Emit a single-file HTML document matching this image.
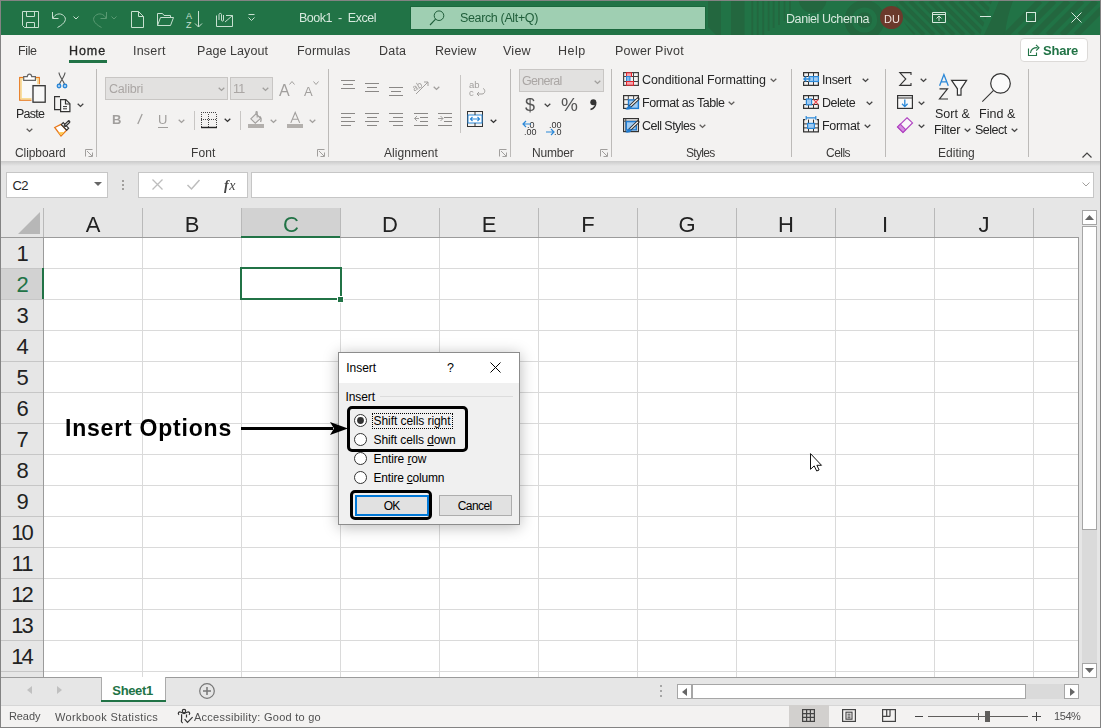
<!DOCTYPE html><html><head><meta charset="utf-8"><style>
html,body{margin:0;padding:0;}
body{width:1101px;height:728px;position:relative;overflow:hidden;background:#f3f2f1;font-family:"Liberation Sans",sans-serif;-webkit-font-smoothing:antialiased;}
.a{position:absolute;}
.t{position:absolute;line-height:1;white-space:nowrap;}
.g{will-change:transform;}
svg{overflow:visible;}
</style></head><body>

<div class="a" style="left:0px;top:0px;width:1101px;height:35px;background:#217346;"></div>
<svg class="a" style="left:700px;top:1px;overflow:hidden" width="400" height="34" viewBox="0 0 400 34"><path d="M8 0H21V34H16L8 26Z" fill="#23673f"/><rect x="31" y="0" width="13.5" height="34" fill="#23673f"/><rect x="51.4" y="0" width="1.8" height="34" fill="#23673f"/><rect x="56.8" y="0" width="1.8" height="34" fill="#23673f"/><rect x="62.3" y="0" width="1.8" height="34" fill="#23673f"/><rect x="67.7" y="0" width="1.8" height="30" fill="#23673f"/><rect x="72.7" y="0" width="1.8" height="27" fill="#23673f"/><rect x="78" y="0" width="1.8" height="24" fill="#23673f"/><rect x="83.6" y="0" width="1.8" height="20" fill="#23673f"/><rect x="89" y="0" width="1.8" height="12" fill="#23673f"/><circle cx="112.7" cy="-2" r="14" fill="#23673f"/><circle cx="164.5" cy="19" r="16.3" stroke="#23673f" stroke-width="7.4" fill="none"/><circle cx="164.5" cy="19" r="7.7" fill="#23673f"/><clipPath id="cpd"><path d="M195 0H292L280 34H214C205 25 198 12 195 0Z"/></clipPath><g clip-path="url(#cpd)"><line x1="180" y1="0" x2="214" y2="34" stroke="#23673f" stroke-width="4"/><line x1="190" y1="0" x2="224" y2="34" stroke="#23673f" stroke-width="4"/><line x1="200" y1="0" x2="234" y2="34" stroke="#23673f" stroke-width="4"/><line x1="210" y1="0" x2="244" y2="34" stroke="#23673f" stroke-width="4"/><line x1="220" y1="0" x2="254" y2="34" stroke="#23673f" stroke-width="4"/><line x1="230" y1="0" x2="264" y2="34" stroke="#23673f" stroke-width="4"/><line x1="240" y1="0" x2="274" y2="34" stroke="#23673f" stroke-width="4"/><line x1="250" y1="0" x2="284" y2="34" stroke="#23673f" stroke-width="4"/><line x1="260" y1="0" x2="294" y2="34" stroke="#23673f" stroke-width="4"/><line x1="270" y1="0" x2="304" y2="34" stroke="#23673f" stroke-width="4"/><line x1="280" y1="0" x2="314" y2="34" stroke="#23673f" stroke-width="4"/><line x1="290" y1="0" x2="324" y2="34" stroke="#23673f" stroke-width="4"/></g><path d="M299 0H313C309 10 306 22 305 34H284C290 22 295 10 299 0Z" fill="#23673f"/><clipPath id="cpe"><path d="M322 0H400V34H300Z"/></clipPath><g clip-path="url(#cpe)"><line x1="340" y1="0" x2="306" y2="34" stroke="#23673f" stroke-width="6"/><line x1="354" y1="0" x2="320" y2="34" stroke="#23673f" stroke-width="6"/><line x1="368" y1="0" x2="334" y2="34" stroke="#23673f" stroke-width="6"/><line x1="382" y1="0" x2="348" y2="34" stroke="#23673f" stroke-width="6"/><line x1="396" y1="0" x2="362" y2="34" stroke="#23673f" stroke-width="6"/><line x1="410" y1="0" x2="376" y2="34" stroke="#23673f" stroke-width="6"/></g></svg>
<svg class="a" style="left:22px;top:11px;" width="17" height="17" viewBox="0 0 17 17" fill="none"><path d="M0.5 0.5H16.5V16.5H2.5L0.5 14.5Z M4.5 0.5V5.5H12.5V0.5 M4.5 16.5V11.5H12.5V16.5" stroke="#c7e0d0" stroke-width="1"/></svg>
<svg class="a" style="left:52px;top:11px;" width="16" height="17" viewBox="0 0 16 17" fill="none"><path d="M0.5 1V7.5H6.5 M1 7 C3 3, 8 1.5, 11.5 4.5 C15 7.5, 14 12, 5.5 16.5" stroke="#c7e0d0" stroke-width="1"/></svg>
<svg class="a" style="left:73px;top:16px;" width="6" height="4" viewBox="0 0 6 4" fill="none"><path d="M0.5 0.5L3 3L5.5 0.5" stroke="#c7e0d0" stroke-width="1"/></svg>
<svg class="a" style="left:91px;top:11px;" width="16" height="17" viewBox="0 0 16 17" fill="none"><path d="M15.5 1V7.5H9.5 M15 7 C13 3, 8 1.5, 4.5 4.5 C1 7.5, 2 12, 10.5 16.5" stroke="#5a9a73" stroke-width="1"/></svg>
<svg class="a" style="left:111px;top:16px;" width="6" height="4" viewBox="0 0 6 4" fill="none"><path d="M0.5 0.5L3 3L5.5 0.5" stroke="#5a9a73" stroke-width="1"/></svg>
<svg class="a" style="left:131px;top:11px;" width="13" height="17" viewBox="0 0 13 17" fill="none"><path d="M0.5 0.5H7.5L12.5 5.5V16.5H0.5Z M7.5 0.5V5.5H12.5" stroke="#c7e0d0" stroke-width="1"/></svg>
<svg class="a" style="left:157px;top:13px;" width="17" height="13" viewBox="0 0 17 13" fill="none"><path d="M0.5 12.5V0.5H5.5L7 2.5H13.5V4.5 M0.5 12.5H13.5L16.5 4.5H3.5L0.5 12.5" stroke="#c7e0d0" stroke-width="1"/></svg>
<svg class="a" style="left:186px;top:11px;" width="18" height="17" viewBox="0 0 18 17" fill="none"><text x="0" y="8" font-family="Liberation Sans" font-size="9" fill="#c7e0d0">A</text><text x="0" y="16.5" font-family="Liberation Sans" font-size="9" fill="#c7e0d0">Z</text><path d="M12.5 0V16 M9 12.5L12.5 16L16 12.5" stroke="#c7e0d0" stroke-width="1"/></svg>
<svg class="a" style="left:216px;top:12px;" width="18" height="15" viewBox="0 0 18 15" fill="none"><path d="M0.5 3.5V14.5H16.5V3.5H10 M16.5 3.5L9 10" stroke="#c7e0d0" stroke-width="1"/><path d="M3 8V2.5C3 1 5.5 1 5.5 2.5V8 C5.5 9.5 7.5 9.5 7.5 8V3" stroke="#c7e0d0" stroke-width="1"/></svg>
<svg class="a" style="left:248px;top:14px;" width="7" height="8" viewBox="0 0 7 8" fill="none"><path d="M0.5 0.5H6.5 M0.5 3.5L3.5 6.5L6.5 3.5" stroke="#c7e0d0" stroke-width="1"/></svg>
<div class="t g" style="left:298.50px;top:12px;font-size:12.5px;color:#d7e9de;font-weight:normal;letter-spacing:-0.472px;">Book1&nbsp; -&nbsp; Excel</div>
<div class="a" style="left:410px;top:6px;width:296px;height:24px;background:#9fcfb2;border:1px solid #1b683d;box-sizing:border-box;"></div>
<svg class="a" style="left:429px;top:10px;" width="16" height="16" viewBox="0 0 16 16" fill="none"><circle cx="10" cy="5.7" r="4.8" stroke="#1f5e3a" stroke-width="1"/><path d="M6.6 9.2L1 15" stroke="#1f5e3a" stroke-width="1.1"/></svg>
<div class="t g" style="left:459.50px;top:12px;font-size:12.5px;color:#1f5e3a;font-weight:normal;letter-spacing:-0.358px;">Search (Alt+Q)</div>
<div class="t g" style="left:785.50px;top:13px;font-size:12.5px;color:#d7e9de;font-weight:normal;letter-spacing:-0.425px;">Daniel Uchenna</div>
<div class="a" style="left:880px;top:6px;width:23px;height:23px;border-radius:50%;background:#6b3a2c;"></div>
<div class="t g" style="left:591.5px;width:600px;text-align:center;top:14px;font-size:11px;color:#f2e6e2;font-weight:normal;">DU</div>
<svg class="a" style="left:932px;top:12px;" width="14" height="11" viewBox="0 0 14 11" fill="none"><path d="M0.5 0.5H13.5V10.5H0.5Z M0.5 2.5H13.5 M7 9V4 M4.5 6.5L7 4L9.5 6.5" stroke="#d7e9de" stroke-width="1"/></svg>
<div class="a" style="left:980px;top:16px;width:11px;height:1px;background:#d7e9de;"></div>
<div class="a" style="left:1026px;top:12px;width:10px;height:10px;border:1px solid #d7e9de;box-sizing:border-box;"></div>
<svg class="a" style="left:1071px;top:12px;" width="11" height="11" viewBox="0 0 11 11" fill="none"><path d="M0.5 0.5L10.5 10.5M10.5 0.5L0.5 10.5" stroke="#d7e9de" stroke-width="1"/></svg>
<div class="t g" style="left:17.50px;top:45px;font-size:12.5px;color:#3b3a39;font-weight:normal;letter-spacing:-0.389px;">File</div>
<div class="t g" style="left:68.50px;top:45px;font-size:12.5px;color:#262626;font-weight:normal;letter-spacing:0.914px;-webkit-text-stroke:0.3px #262626;">Home</div>
<div class="t g" style="left:133.00px;top:45px;font-size:12.5px;color:#3b3a39;font-weight:normal;letter-spacing:0.222px;">Insert</div>
<div class="t g" style="left:196.50px;top:45px;font-size:12.5px;color:#3b3a39;font-weight:normal;letter-spacing:0.072px;">Page Layout</div>
<div class="t g" style="left:297.20px;top:45px;font-size:12.5px;color:#3b3a39;font-weight:normal;letter-spacing:0.163px;">Formulas</div>
<div class="t g" style="left:379.40px;top:45px;font-size:12.5px;color:#3b3a39;font-weight:normal;letter-spacing:0.198px;">Data</div>
<div class="t g" style="left:435.00px;top:45px;font-size:12.5px;color:#3b3a39;font-weight:normal;letter-spacing:0.050px;">Review</div>
<div class="t g" style="left:503.00px;top:45px;font-size:12.5px;color:#3b3a39;font-weight:normal;letter-spacing:0.256px;">View</div>
<div class="t g" style="left:558.20px;top:45px;font-size:12.5px;color:#3b3a39;font-weight:normal;letter-spacing:0.470px;">Help</div>
<div class="t g" style="left:615.20px;top:45px;font-size:12.5px;color:#3b3a39;font-weight:normal;letter-spacing:0.200px;">Power Pivot</div>
<div class="a" style="left:69px;top:60px;width:38px;height:3px;background:#217346;"></div>
<div class="a" style="left:1020px;top:38px;width:66px;height:22px;background:#fff;border:1px solid #dcdad8;border-radius:4px;"></div>
<svg class="a" style="left:1027px;top:43px;" width="14" height="14" viewBox="0 0 14 14" fill="none"><path d="M1.5 5.5V12.5H9.5V9.5" stroke="#217346" stroke-width="1.1"/><path d="M3.5 10C3.8 6.5 6.5 4.6 10.5 4.6" stroke="#217346" stroke-width="1.1"/><path d="M9 1.8L12 4.7L9.2 7.6" stroke="#217346" stroke-width="1.1"/></svg>
<div class="t g" style="left:1043.20px;top:44px;font-size:13px;color:#217346;font-weight:bold;letter-spacing:-0.228px;">Share</div>
<div class="a" style="left:96px;top:69px;width:1px;height:88px;background:#bcbab8;"></div>
<div class="a" style="left:328px;top:69px;width:1px;height:88px;background:#bcbab8;"></div>
<div class="a" style="left:510px;top:69px;width:1px;height:88px;background:#bcbab8;"></div>
<div class="a" style="left:611px;top:69px;width:1px;height:88px;background:#bcbab8;"></div>
<div class="a" style="left:791px;top:69px;width:1px;height:88px;background:#bcbab8;"></div>
<div class="a" style="left:885px;top:69px;width:1px;height:88px;background:#bcbab8;"></div>
<div class="a" style="left:1028px;top:69px;width:1px;height:88px;background:#bcbab8;"></div>
<div class="a" style="left:0;top:161px;width:1101px;height:5px;background:linear-gradient(#cacaca,#e6e6e6);"></div>
<div class="a" style="left:0px;top:166px;width:1101px;height:43px;background:#e6e6e6;"></div>
<div class="t g" style="left:14.60px;top:147px;font-size:12px;color:#3b3a39;font-weight:normal;letter-spacing:-0.075px;">Clipboard</div>
<div class="t g" style="left:191.40px;top:147px;font-size:12px;color:#3b3a39;font-weight:normal;letter-spacing:0.146px;">Font</div>
<div class="t g" style="left:384.10px;top:147px;font-size:12px;color:#3b3a39;font-weight:normal;letter-spacing:0.047px;">Alignment</div>
<div class="t g" style="left:531.50px;top:147px;font-size:12px;color:#3b3a39;font-weight:normal;letter-spacing:-0.198px;">Number</div>
<div class="t g" style="left:686.30px;top:147px;font-size:12px;color:#3b3a39;font-weight:normal;letter-spacing:-0.665px;">Styles</div>
<div class="t g" style="left:825.50px;top:147px;font-size:12px;color:#3b3a39;font-weight:normal;letter-spacing:-0.514px;">Cells</div>
<div class="t g" style="left:937.60px;top:147px;font-size:12px;color:#3b3a39;font-weight:normal;letter-spacing:0.014px;">Editing</div>
<svg class="a" style="left:85px;top:149px;" width="8" height="8" viewBox="0 0 8 8" fill="none"><path d="M0.5 7.5V0.5H7.5 M2 2L7 7 M3.5 7.5H7.5V3.5" stroke="#a19f9d" stroke-width="1"/></svg>
<svg class="a" style="left:317px;top:149px;" width="8" height="8" viewBox="0 0 8 8" fill="none"><path d="M0.5 7.5V0.5H7.5 M2 2L7 7 M3.5 7.5H7.5V3.5" stroke="#a19f9d" stroke-width="1"/></svg>
<svg class="a" style="left:499px;top:149px;" width="8" height="8" viewBox="0 0 8 8" fill="none"><path d="M0.5 7.5V0.5H7.5 M2 2L7 7 M3.5 7.5H7.5V3.5" stroke="#a19f9d" stroke-width="1"/></svg>
<svg class="a" style="left:600px;top:149px;" width="8" height="8" viewBox="0 0 8 8" fill="none"><path d="M0.5 7.5V0.5H7.5 M2 2L7 7 M3.5 7.5H7.5V3.5" stroke="#a19f9d" stroke-width="1"/></svg>
<svg class="a" style="left:18px;top:72px;" width="30" height="32" viewBox="0 0 30 32" fill="none"><rect x="1.75" y="5.55" width="19.5" height="22.6" fill="#fafafa" stroke="#e8791c" stroke-width="1.3"/><rect x="3.1" y="6.9" width="16.8" height="19.9" fill="none" stroke="#f8d98b" stroke-width="1.4"/><path d="M5.7 8.4V4.6H9.3C9.6 1.2 13.4 1.2 13.7 4.6H17.4V8.4Z" fill="#fff" stroke="#666" stroke-width="1.2"/><rect x="15" y="13.7" width="12.2" height="16.5" fill="none" stroke="#f3f2f1" stroke-width="3"/><rect x="15" y="13.7" width="12.2" height="16.5" fill="#f8f8f8" stroke="#333" stroke-width="1.3"/></svg>
<div class="t g" style="left:15.90px;top:108px;font-size:12.5px;color:#262626;font-weight:normal;letter-spacing:-0.734px;">Paste</div>
<svg class="a" style="left:26px;top:128px;" width="7" height="4" viewBox="0 0 7 4" fill="none"><path d="M0.7 0.7L3.5 3.4L6.3 0.7" stroke="#605e5c" stroke-width="1.3"/></svg>
<svg class="a" style="left:56px;top:72px;" width="12" height="17" viewBox="0 0 12 17" fill="none"><path d="M3 0.5C3 4 7 8 8.5 12 M9 0.5C9 4 5 8 3.5 12" stroke="#555" stroke-width="1.1"/><circle cx="3" cy="14" r="1.7" fill="#cfe4f7" stroke="#2b88d8" stroke-width="1.5"/><circle cx="9" cy="14" r="1.7" fill="#cfe4f7" stroke="#2b88d8" stroke-width="1.5"/></svg>
<svg class="a" style="left:54px;top:96px;" width="17" height="17" viewBox="0 0 17 17" fill="none"><path d="M6 0.6H0.6V13.6H6" stroke="#333" stroke-width="1.2"/><path d="M6.6 3.6H11.8L15.9 7.7V15.6H6.6Z" fill="#fafafa" stroke="#333" stroke-width="1.2"/><path d="M11.5 3.6V8H15.9" stroke="#333" stroke-width="1.2"/><path d="M9 10.6H13 M9 12.8H13" stroke="#333" stroke-width="1"/></svg>
<svg class="a" style="left:77px;top:103px;" width="7" height="4" viewBox="0 0 7 4" fill="none"><path d="M0.7 0.7L3.5 3.4L6.3 0.7" stroke="#444" stroke-width="1.3"/></svg>
<svg class="a" style="left:54px;top:120px;" width="17" height="17" viewBox="0 0 17 17" fill="none"><path d="M0.7 7.5L7 4.4L12.6 10.2L7 16Z" fill="#fff" stroke="#e8791c" stroke-width="1.3"/><path d="M4.2 12.2L7 15.2L10.3 12Z" fill="#ffc94d"/><path d="M7.3 4.6L9.2 2.7L14.6 8.2L12.7 10.1Z" fill="#fff" stroke="#333" stroke-width="1.2"/><path d="M11.2 5.4L14.8 1.8" stroke="#333" stroke-width="3.2" stroke-linecap="round"/><path d="M11.4 5.2L14.7 1.9" stroke="#fff" stroke-width="1"/></svg>
<div class="a" style="left:105px;top:77px;width:123px;height:23px;background:#e2e1e0;border:1px solid #c8c6c4;box-sizing:border-box;"></div>
<div class="t g" style="left:108.60px;top:83px;font-size:12.5px;color:#aaa6a4;font-weight:normal;letter-spacing:-0.205px;">Calibri</div>
<svg class="a" style="left:218px;top:87px;" width="7" height="4" viewBox="0 0 7 4" fill="none"><path d="M0.7 0.7L3.5 3.4L6.3 0.7" stroke="#a19f9d" stroke-width="1.3"/></svg>
<div class="a" style="left:230px;top:77px;width:43px;height:23px;background:#e2e1e0;border:1px solid #c8c6c4;box-sizing:border-box;"></div>
<div class="t g" style="left:233.30px;top:83px;font-size:12.5px;color:#aaa6a4;font-weight:normal;letter-spacing:-0.742px;">11</div>
<svg class="a" style="left:262px;top:87px;" width="7" height="4" viewBox="0 0 7 4" fill="none"><path d="M0.7 0.7L3.5 3.4L6.3 0.7" stroke="#a19f9d" stroke-width="1.3"/></svg>
<div class="t g" style="left:279.00px;top:83px;font-size:16px;color:#a19f9d;font-weight:normal;">A</div>
<svg class="a" style="left:289px;top:81px;" width="6" height="4" viewBox="0 0 6 4" fill="none"><path d="M0.5 3.5L3 0.5L5.5 3.5" stroke="#a19f9d" stroke-width="1"/></svg>
<div class="t g" style="left:304.00px;top:85px;font-size:13px;color:#a19f9d;font-weight:normal;">A</div>
<svg class="a" style="left:313px;top:81px;" width="6" height="4" viewBox="0 0 6 4" fill="none"><path d="M0.5 0.5L3 3.5L5.5 0.5" stroke="#a19f9d" stroke-width="1"/></svg>
<div class="t g" style="left:112.00px;top:113px;font-size:13px;color:#a19f9d;font-weight:bold;">B</div>
<svg class="a" style="left:136px;top:113px;" width="8" height="12" viewBox="0 0 8 12" fill="none"><path d="M1.8 11L6.2 1" stroke="#a19f9d" stroke-width="1.3"/></svg>
<div class="t g" style="left:157.50px;top:113px;font-size:13px;color:#a19f9d;font-weight:normal;">U</div>
<div class="a" style="left:158px;top:127px;width:10px;height:1px;background:#a19f9d;"></div>
<svg class="a" style="left:178px;top:119px;" width="7" height="4" viewBox="0 0 7 4" fill="none"><path d="M0.7 0.7L3.5 3.4L6.3 0.7" stroke="#a19f9d" stroke-width="1.3"/></svg>
<div class="a" style="left:194px;top:111px;width:1px;height:19px;background:#c8c6c4;"></div>
<svg class="a" style="left:201px;top:112px;" width="17" height="17" viewBox="0 0 17 17" fill="none"><rect x="0" y="0" width="1" height="1" fill="#444"/><rect x="0" y="7" width="1" height="1" fill="#444"/><rect x="2" y="0" width="1" height="1" fill="#444"/><rect x="2" y="7" width="1" height="1" fill="#444"/><rect x="4" y="0" width="1" height="1" fill="#444"/><rect x="4" y="7" width="1" height="1" fill="#444"/><rect x="6" y="0" width="1" height="1" fill="#444"/><rect x="6" y="7" width="1" height="1" fill="#444"/><rect x="8" y="0" width="1" height="1" fill="#444"/><rect x="8" y="7" width="1" height="1" fill="#444"/><rect x="10" y="0" width="1" height="1" fill="#444"/><rect x="10" y="7" width="1" height="1" fill="#444"/><rect x="12" y="0" width="1" height="1" fill="#444"/><rect x="12" y="7" width="1" height="1" fill="#444"/><rect x="14" y="0" width="1" height="1" fill="#444"/><rect x="14" y="7" width="1" height="1" fill="#444"/><rect x="0" y="2" width="1" height="1" fill="#444"/><rect x="0" y="4" width="1" height="1" fill="#444"/><rect x="0" y="6" width="1" height="1" fill="#444"/><rect x="0" y="8" width="1" height="1" fill="#444"/><rect x="0" y="10" width="1" height="1" fill="#444"/><rect x="0" y="12" width="1" height="1" fill="#444"/><rect x="0" y="14" width="1" height="1" fill="#444"/><rect x="7" y="2" width="1" height="1" fill="#444"/><rect x="7" y="4" width="1" height="1" fill="#444"/><rect x="7" y="6" width="1" height="1" fill="#444"/><rect x="7" y="8" width="1" height="1" fill="#444"/><rect x="7" y="10" width="1" height="1" fill="#444"/><rect x="7" y="12" width="1" height="1" fill="#444"/><rect x="7" y="14" width="1" height="1" fill="#444"/><rect x="15" y="2" width="1" height="1" fill="#444"/><rect x="15" y="4" width="1" height="1" fill="#444"/><rect x="15" y="6" width="1" height="1" fill="#444"/><rect x="15" y="8" width="1" height="1" fill="#444"/><rect x="15" y="10" width="1" height="1" fill="#444"/><rect x="15" y="12" width="1" height="1" fill="#444"/><rect x="15" y="14" width="1" height="1" fill="#444"/><path d="M0 15.5H16" stroke="#222" stroke-width="1.4"/></svg>
<svg class="a" style="left:224px;top:118px;" width="7" height="4" viewBox="0 0 7 4" fill="none"><path d="M0.7 0.7L3.5 3.4L6.3 0.7" stroke="#333" stroke-width="1.3"/></svg>
<div class="a" style="left:240px;top:111px;width:1px;height:19px;background:#c8c6c4;"></div>
<svg class="a" style="left:247px;top:111px;" width="18" height="18" viewBox="0 0 18 18" fill="none"><path d="M3.8 7.8L9 2.8L13.6 7.3L8.3 12.2Z" fill="#ecebea" stroke="#a19f9d" stroke-width="1.1"/><path d="M9 2.8V1.2C9 0.3 10.2 0.3 10.2 1.2V6.5" stroke="#a19f9d" stroke-width="1.1"/><path d="M12.6 5.3C14.2 6.6 14.4 8.8 13.6 11" stroke="#a19f9d" stroke-width="1.3"/><rect x="1" y="13" width="16" height="4" fill="#b3b0ad"/></svg>
<svg class="a" style="left:270px;top:119px;" width="7" height="4" viewBox="0 0 7 4" fill="none"><path d="M0.7 0.7L3.5 3.4L6.3 0.7" stroke="#a19f9d" stroke-width="1.3"/></svg>
<svg class="a" style="left:286px;top:111px;" width="18" height="18" viewBox="0 0 18 18" fill="none"><path d="M4.8 11.9L9.2 1.5L13.7 11.9 M6.5 8.3H12" stroke="#a19f9d" stroke-width="1.1"/><rect x="1" y="13" width="16" height="4" fill="#b3b0ad"/></svg>
<svg class="a" style="left:309px;top:119px;" width="7" height="4" viewBox="0 0 7 4" fill="none"><path d="M0.7 0.7L3.5 3.4L6.3 0.7" stroke="#a19f9d" stroke-width="1.3"/></svg>
<div class="a" style="left:341px;top:80px;width:14px;height:1px;background:#8a8886;"></div>
<div class="a" style="left:343px;top:84px;width:10px;height:1px;background:#8a8886;"></div>
<div class="a" style="left:341px;top:88px;width:14px;height:1px;background:#8a8886;"></div>
<div class="a" style="left:365px;top:83px;width:14px;height:1px;background:#8a8886;"></div>
<div class="a" style="left:367px;top:87px;width:10px;height:1px;background:#8a8886;"></div>
<div class="a" style="left:365px;top:91px;width:14px;height:1px;background:#8a8886;"></div>
<div class="a" style="left:389px;top:87px;width:14px;height:1px;background:#8a8886;"></div>
<div class="a" style="left:391px;top:91px;width:10px;height:1px;background:#8a8886;"></div>
<div class="a" style="left:389px;top:95px;width:14px;height:1px;background:#8a8886;"></div>
<svg class="a" style="left:413px;top:80px;" width="17" height="15" viewBox="0 0 17 15" fill="none"><text x="-1" y="9" font-family="Liberation Sans" font-size="9" fill="#a19f9d" transform="rotate(-30 5 6)">ab</text><path d="M3 14L15 2 M11 2H15V6" stroke="#a19f9d" stroke-width="1"/></svg>
<svg class="a" style="left:433px;top:86px;" width="7" height="4" viewBox="0 0 7 4" fill="none"><path d="M0.7 0.7L3.5 3.4L6.3 0.7" stroke="#a19f9d" stroke-width="1.3"/></svg>
<div class="a" style="left:460px;top:75px;width:1px;height:58px;background:#c8c6c4;"></div>
<svg class="a" style="left:469px;top:80px;" width="17" height="17" viewBox="0 0 17 17" fill="none"><text x="0" y="8" font-family="Liberation Sans" font-size="9.5" fill="#a19f9d">ab</text><text x="0" y="16" font-family="Liberation Sans" font-size="9.5" fill="#a19f9d">c</text><path d="M14 8.5C16.5 9 16.5 14 13 14H8 M10 12L8 14L10 16" stroke="#a19f9d" stroke-width="1"/></svg>
<div class="a" style="left:341px;top:113px;width:14px;height:1px;background:#8a8886;"></div>
<div class="a" style="left:341px;top:117px;width:10px;height:1px;background:#8a8886;"></div>
<div class="a" style="left:341px;top:121px;width:14px;height:1px;background:#8a8886;"></div>
<div class="a" style="left:341px;top:125px;width:10px;height:1px;background:#8a8886;"></div>
<div class="a" style="left:365px;top:113px;width:14px;height:1px;background:#8a8886;"></div>
<div class="a" style="left:367px;top:117px;width:10px;height:1px;background:#8a8886;"></div>
<div class="a" style="left:365px;top:121px;width:14px;height:1px;background:#8a8886;"></div>
<div class="a" style="left:367px;top:125px;width:10px;height:1px;background:#8a8886;"></div>
<div class="a" style="left:389px;top:113px;width:14px;height:1px;background:#8a8886;"></div>
<div class="a" style="left:393px;top:117px;width:10px;height:1px;background:#8a8886;"></div>
<div class="a" style="left:389px;top:121px;width:14px;height:1px;background:#8a8886;"></div>
<div class="a" style="left:393px;top:125px;width:10px;height:1px;background:#8a8886;"></div>
<div class="a" style="left:414px;top:113px;width:14px;height:1px;background:#8a8886;"></div>
<div class="a" style="left:420px;top:117px;width:8px;height:1px;background:#8a8886;"></div>
<div class="a" style="left:420px;top:121px;width:8px;height:1px;background:#8a8886;"></div>
<div class="a" style="left:414px;top:125px;width:14px;height:1px;background:#8a8886;"></div>
<svg class="a" style="left:414px;top:115px;" width="6" height="7" viewBox="0 0 6 7" fill="none"><path d="M5 3.5H0.5 M3 1L0.5 3.5L3 6" stroke="#a19f9d" stroke-width="1"/></svg>
<div class="a" style="left:438px;top:113px;width:14px;height:1px;background:#8a8886;"></div>
<div class="a" style="left:444px;top:117px;width:8px;height:1px;background:#8a8886;"></div>
<div class="a" style="left:444px;top:121px;width:8px;height:1px;background:#8a8886;"></div>
<div class="a" style="left:438px;top:125px;width:14px;height:1px;background:#8a8886;"></div>
<svg class="a" style="left:438px;top:115px;" width="6" height="7" viewBox="0 0 6 7" fill="none"><path d="M0 3.5H5 M2.5 1L5 3.5L2.5 6" stroke="#a19f9d" stroke-width="1"/></svg>
<svg class="a" style="left:467px;top:111px;" width="16" height="16" viewBox="0 0 16 16" fill="none"><rect x="0.5" y="0.5" width="15" height="15" stroke="#333" stroke-width="1"/><rect x="1" y="4" width="14" height="8" fill="#fff" stroke="#2b88d8" stroke-width="1"/><path d="M8 0.5V4 M8 12V15.5" stroke="#333"/><path d="M3.5 8H12.5 M5.5 6L3.5 8L5.5 10 M10.5 6L12.5 8L10.5 10" stroke="#2b88d8" stroke-width="1.2"/></svg>
<svg class="a" style="left:490px;top:119px;" width="7" height="4" viewBox="0 0 7 4" fill="none"><path d="M0.7 0.7L3.5 3.4L6.3 0.7" stroke="#333" stroke-width="1.3"/></svg>
<div class="a" style="left:519px;top:69px;width:85px;height:23px;background:#e2e1e0;border:1px solid #c8c6c4;box-sizing:border-box;"></div>
<div class="t g" style="left:522.00px;top:75px;font-size:12.5px;color:#aaa6a4;font-weight:normal;letter-spacing:-0.712px;">General</div>
<svg class="a" style="left:594px;top:80px;" width="7" height="4" viewBox="0 0 7 4" fill="none"><path d="M0.7 0.7L3.5 3.4L6.3 0.7" stroke="#a19f9d" stroke-width="1.3"/></svg>
<div class="t g" style="left:525.00px;top:96px;font-size:18px;color:#555;font-weight:normal;">$</div>
<svg class="a" style="left:544px;top:103px;" width="7" height="4" viewBox="0 0 7 4" fill="none"><path d="M0.7 0.7L3.5 3.4L6.3 0.7" stroke="#444" stroke-width="1.3"/></svg>
<div class="t g" style="left:560.80px;top:95px;font-size:19px;color:#555;font-weight:normal;letter-spacing:-1.906px;">%</div>
<svg class="a" style="left:589px;top:99px;" width="9" height="11" viewBox="0 0 9 11" fill="none"><circle cx="4.3" cy="3.3" r="3" fill="#333"/><path d="M6.6 3.5C7 6.5 5 9.5 1.5 10.5" stroke="#333" stroke-width="1.6" fill="none"/></svg>
<svg class="a" style="left:522px;top:120px;" width="17" height="16" viewBox="0 0 17 16" fill="none"><text x="5" y="7.5" font-family="Liberation Sans" font-size="9" fill="#333">.0</text><text x="2" y="15" font-family="Liberation Sans" font-size="9" fill="#333">.00</text><path d="M9 4H1 M4 1L1 4L4 7" stroke="#2b88d8" stroke-width="1.2"/></svg>
<svg class="a" style="left:546px;top:120px;" width="17" height="16" viewBox="0 0 17 16" fill="none"><text x="3" y="7.5" font-family="Liberation Sans" font-size="9" fill="#333">.00</text><text x="8" y="15" font-family="Liberation Sans" font-size="9" fill="#333">.0</text><path d="M0 12H8 M5 9L8 12L5 15" stroke="#2b88d8" stroke-width="1.2"/></svg>
<svg class="a" style="left:623px;top:72px;" width="16" height="14" viewBox="0 0 16 14" fill="none"><rect x="0.6" y="0.6" width="14.8" height="12.8" stroke="#444" stroke-width="1.2"/><path d="M0.5 4.5H15.5 M0.5 9.5H15.5 M5.5 0.5V13.5 M10.5 0.5V13.5" stroke="#444"/><rect x="3.5" y="0.8" width="5" height="3.7" fill="#f4a4ae" stroke="#e3242b"/><rect x="3.5" y="4.5" width="3.5" height="5" fill="#7fbaf0" stroke="#2b88d8"/><rect x="3.5" y="9.5" width="7" height="3.7" fill="#f4a4ae" stroke="#e3242b"/></svg>
<div class="t g" style="left:641.50px;top:74px;font-size:12.5px;color:#262626;font-weight:normal;letter-spacing:-0.089px;">Conditional Formatting</div>
<svg class="a" style="left:769.5px;top:78px;" width="7" height="4" viewBox="0 0 7 4" fill="none"><path d="M0.7 0.7L3.5 3.4L6.3 0.7" stroke="#605e5c" stroke-width="1.3"/></svg>
<svg class="a" style="left:623px;top:95px;" width="17" height="16" viewBox="0 0 17 16" fill="none"><rect x="0.6" y="0.6" width="14.8" height="12.8" stroke="#333" stroke-width="1.2"/><path d="M5.3 0.6V4.7 M10.6 0.6V4.7 M0.6 4.7H5.3 M0.6 9.4H5.3" stroke="#444" stroke-width="1"/><rect x="5.5" y="4.9" width="9.9" height="8.5" fill="#9fcbf3" stroke="#1f7bd0" stroke-width="1.4"/><path d="M6.8 11.6L15 3.8" stroke="#333" stroke-width="3.2" stroke-linecap="round"/><path d="M7 11.4L14.8 4" stroke="#fff" stroke-width="1.1"/><path d="M2.4 14.6C3.6 12.6 5 10.6 7.2 10.4C8.6 11.2 8.6 12.8 7.6 13.8C6.2 14.8 4.2 14.8 2.4 14.6Z" fill="#1f7bd0"/></svg>
<div class="t g" style="left:641.50px;top:97px;font-size:12.5px;color:#262626;font-weight:normal;letter-spacing:-0.460px;">Format as Table</div>
<svg class="a" style="left:727.5px;top:101px;" width="7" height="4" viewBox="0 0 7 4" fill="none"><path d="M0.7 0.7L3.5 3.4L6.3 0.7" stroke="#605e5c" stroke-width="1.3"/></svg>
<svg class="a" style="left:623px;top:118px;" width="17" height="16" viewBox="0 0 17 16" fill="none"><rect x="0.6" y="0.6" width="14.8" height="13" stroke="#333" stroke-width="1.2"/><path d="M0.6 3.2H15.4 M2.8 0.6V13.6" stroke="#444"/><rect x="3.3" y="3.6" width="10" height="8.3" fill="#9fcbf3" stroke="#1f7bd0" stroke-width="1.4"/><path d="M6.8 11.6L15 3.8" stroke="#333" stroke-width="3.2" stroke-linecap="round"/><path d="M7 11.4L14.8 4" stroke="#fff" stroke-width="1.1"/><path d="M2.4 14.6C3.6 12.6 5 10.6 7.2 10.4C8.6 11.2 8.6 12.8 7.6 13.8C6.2 14.8 4.2 14.8 2.4 14.6Z" fill="#1f7bd0"/></svg>
<div class="t g" style="left:641.50px;top:120px;font-size:12.5px;color:#262626;font-weight:normal;letter-spacing:-0.532px;">Cell Styles</div>
<svg class="a" style="left:698.5px;top:124px;" width="7" height="4" viewBox="0 0 7 4" fill="none"><path d="M0.7 0.7L3.5 3.4L6.3 0.7" stroke="#605e5c" stroke-width="1.3"/></svg>
<svg class="a" style="left:803px;top:72px;" width="16" height="14" viewBox="0 0 16 14" fill="none"><path d="M0.6 4.3V0.6H15.4V13.4H0.6V9.7" stroke="#333" stroke-width="1.2"/><path d="M5.5 0.6V4.5 M10.5 0.6V4.5 M5.5 9.5V13.4 M10.5 9.5V13.4 M0.6 4.5H5.5 M0.6 9.5H5.5" stroke="#333"/><rect x="6.2" y="4.6" width="9.2" height="4.9" fill="#9fcbf3" stroke="#2b88d8" stroke-width="1.2"/><path d="M10.5 4.6V9.5" stroke="#2b88d8"/><path d="M7.5 7H0.9 M3.4 4.5L0.9 7L3.4 9.5" stroke="#2b88d8" stroke-width="1.3"/></svg>
<div class="t g" style="left:821.80px;top:74px;font-size:12.5px;color:#262626;font-weight:normal;letter-spacing:-0.361px;">Insert</div>
<svg class="a" style="left:861.5px;top:78px;" width="7" height="4" viewBox="0 0 7 4" fill="none"><path d="M0.7 0.7L3.5 3.4L6.3 0.7" stroke="#444" stroke-width="1.3"/></svg>
<svg class="a" style="left:803px;top:95px;" width="16" height="14" viewBox="0 0 16 14" fill="none"><path d="M0.6 4.5V0.6H15.4V4.5 M0.6 9.5V13.4H15.4V9.5" stroke="#333" stroke-width="1.2"/><path d="M0.6 4.5H15.4 M0.6 9.5H15.4 M5.5 0.6V4.5 M10.5 0.6V4.5 M5.5 9.5V13.4 M10.5 9.5V13.4" stroke="#333"/><rect x="3.4" y="4" width="5.2" height="5.8" fill="#9fcbf3" stroke="#2b88d8" stroke-width="1.2"/><path d="M10.4 4.4L15.4 9.6 M15.4 4.4L10.4 9.6" stroke="#e8484f" stroke-width="1.2"/></svg>
<div class="t g" style="left:821.80px;top:97px;font-size:12.5px;color:#262626;font-weight:normal;letter-spacing:-0.507px;">Delete</div>
<svg class="a" style="left:865.5px;top:101px;" width="7" height="4" viewBox="0 0 7 4" fill="none"><path d="M0.7 0.7L3.5 3.4L6.3 0.7" stroke="#444" stroke-width="1.3"/></svg>
<svg class="a" style="left:803px;top:116px;" width="16" height="17" viewBox="0 0 16 17" fill="none"><path d="M3.2 1.9H12.8 M3.2 0V3.8 M12.8 0V3.8" stroke="#2b88d8" stroke-width="1.2"/><path d="M2.2 3.6H0.6V15.9H15.4V3.6H13.8" stroke="#333" stroke-width="1.2"/><path d="M0.6 7.9H15.4 M0.6 11.9H15.4 M5.5 3.6V15.9 M10.5 3.6V15.9" stroke="#333"/><rect x="4.6" y="7.4" width="6.8" height="5" fill="#9fcbf3" stroke="#2b88d8" stroke-width="1.2"/></svg>
<div class="t g" style="left:821.80px;top:120px;font-size:12.5px;color:#262626;font-weight:normal;letter-spacing:-0.299px;">Format</div>
<svg class="a" style="left:863.5px;top:124px;" width="7" height="4" viewBox="0 0 7 4" fill="none"><path d="M0.7 0.7L3.5 3.4L6.3 0.7" stroke="#444" stroke-width="1.3"/></svg>
<svg class="a" style="left:899px;top:72px;" width="13" height="14" viewBox="0 0 13 14" fill="none"><path d="M12 3V0.6H0.8L6.8 7L0.8 13.4H12V11" stroke="#333" stroke-width="1.1" fill="none"/></svg>
<svg class="a" style="left:919.5px;top:78px;" width="7" height="4" viewBox="0 0 7 4" fill="none"><path d="M0.7 0.7L3.5 3.4L6.3 0.7" stroke="#444" stroke-width="1.3"/></svg>
<svg class="a" style="left:897px;top:95px;" width="16" height="14" viewBox="0 0 16 14" fill="none"><rect x="0.6" y="0.6" width="14.8" height="12.8" fill="#fafafa" stroke="#333" stroke-width="1.2"/><path d="M0.6 3H15.4" stroke="#333"/><path d="M7.8 4.5V11.5 M5 8.8L7.8 11.6L10.6 8.8" stroke="#2b88d8" stroke-width="1.3"/></svg>
<svg class="a" style="left:917.5px;top:101px;" width="7" height="4" viewBox="0 0 7 4" fill="none"><path d="M0.7 0.7L3.5 3.4L6.3 0.7" stroke="#444" stroke-width="1.3"/></svg>
<svg class="a" style="left:897px;top:117px;" width="17" height="17" viewBox="0 0 17 17" fill="none"><path d="M10 0.8L15.5 5.9L6 15.4L0.6 9.9Z" fill="#fafafa" stroke="#b146c2" stroke-width="1.2"/><path d="M3.3 7.2L8.7 12.7L6 15.4L0.6 9.9Z" fill="#d58fe0" stroke="#b146c2" stroke-width="1.2"/></svg>
<svg class="a" style="left:917.5px;top:123.5px;" width="7" height="4" viewBox="0 0 7 4" fill="none"><path d="M0.7 0.7L3.5 3.4L6.3 0.7" stroke="#444" stroke-width="1.3"/></svg>
<svg class="a" style="left:938px;top:73px;" width="30" height="28" viewBox="0 0 30 28" fill="none"><path d="M1.6 12.8L5.9 1.5L10.3 12.8 M3.2 8.8H8.6" stroke="#2b88d8" stroke-width="1.3" fill="none"/><path d="M1.5 15.8H9.5L1.5 26H10" stroke="#333" stroke-width="1.2" fill="none"/><path d="M13.6 7.4H28.6L23 15.8V22.2H19.4V15.8Z" fill="#fafafa" stroke="#333" stroke-width="1.2"/></svg>
<div class="t g" style="left:935.00px;top:108px;font-size:12.5px;color:#262626;font-weight:normal;letter-spacing:0.025px;">Sort &amp;</div>
<div class="t g" style="left:933.70px;top:124px;font-size:12.5px;color:#262626;font-weight:normal;letter-spacing:-0.280px;">Filter</div>
<svg class="a" style="left:963.5px;top:128px;" width="7" height="4" viewBox="0 0 7 4" fill="none"><path d="M0.7 0.7L3.5 3.4L6.3 0.7" stroke="#444" stroke-width="1.3"/></svg>
<svg class="a" style="left:981px;top:71px;" width="32" height="32" viewBox="0 0 32 32" fill="none"><circle cx="19.5" cy="12.4" r="9.8" fill="#fafafa" stroke="#333" stroke-width="1.2"/><path d="M12.3 19.6L1.3 30.6" stroke="#333" stroke-width="1.1"/></svg>
<div class="t g" style="left:978.60px;top:108px;font-size:12.5px;color:#262626;font-weight:normal;letter-spacing:0.043px;">Find &amp;</div>
<div class="t g" style="left:975.20px;top:124px;font-size:12.5px;color:#262626;font-weight:normal;letter-spacing:-0.525px;">Select</div>
<svg class="a" style="left:1010.5px;top:128px;" width="7" height="4" viewBox="0 0 7 4" fill="none"><path d="M0.7 0.7L3.5 3.4L6.3 0.7" stroke="#444" stroke-width="1.3"/></svg>
<svg class="a" style="left:1082px;top:152px;" width="10" height="6" viewBox="0 0 10 6" fill="none"><path d="M0.5 5.5L5 1L9.5 5.5" stroke="#444" stroke-width="1.2"/></svg>
<div class="a" style="left:6px;top:172px;width:102px;height:26px;background:#fff;border:1px solid #c6c6c6;box-sizing:border-box;"></div>
<div class="t " style="left:12.50px;top:179px;font-size:13px;color:#262626;font-weight:normal;letter-spacing:-0.612px;">C2</div>
<svg class="a" style="left:94px;top:182px;" width="8" height="4" viewBox="0 0 8 4" fill="none"><path d="M0 0H8L4 4Z" fill="#666"/></svg>
<div class="a" style="left:122px;top:180px;width:2px;height:2px;background:#a19f9d;"></div>
<div class="a" style="left:122px;top:184px;width:2px;height:2px;background:#a19f9d;"></div>
<div class="a" style="left:122px;top:188px;width:2px;height:2px;background:#a19f9d;"></div>
<div class="a" style="left:138px;top:172px;width:110px;height:26px;background:#fff;border:1px solid #c6c6c6;box-sizing:border-box;"></div>
<svg class="a" style="left:152px;top:179px;" width="11" height="11" viewBox="0 0 11 11" fill="none"><path d="M0.5 0.5L10.5 10.5M10.5 0.5L0.5 10.5" stroke="#bdbdbd" stroke-width="1.3"/></svg>
<svg class="a" style="left:187px;top:179px;" width="13" height="11" viewBox="0 0 13 11" fill="none"><path d="M0.5 6L4.5 10L12.5 1" stroke="#bdbdbd" stroke-width="1.5"/></svg>
<div class="t g" style="left:224.00px;top:179px;font-size:14px;color:#444;font-weight:normal;letter-spacing:0.555px;font-family:'Liberation Serif';"><i><b>f</b>x</i></div>
<div class="a" style="left:251px;top:172px;width:843px;height:26px;background:#fff;border:1px solid #c6c6c6;box-sizing:border-box;"></div>
<svg class="a" style="left:1082px;top:182px;" width="8" height="5" viewBox="0 0 8 5" fill="none"><path d="M0.5 0.5L4 4L7.5 0.5" stroke="#a19f9d" stroke-width="1"/></svg>
<div class="a" style="left:43px;top:237px;width:1035px;height:440px;background:#fff;"></div>
<div class="a" style="left:1px;top:208px;width:1099px;height:29px;background:#e6e6e6;"></div>
<svg class="a" style="left:18px;top:212px;" width="23" height="23" viewBox="0 0 23 23" fill="none"><path d="M22 0V22H0Z" fill="#b7b7b7"/></svg>
<div class="a" style="left:241px;top:208px;width:99px;height:29px;background:#d2d2d2;"></div>
<div class="a" style="left:43px;top:237px;width:1px;height:440px;background:#dadada;"></div>
<div class="a" style="left:43px;top:208px;width:1px;height:29px;background:#b9b9b9;"></div>
<div class="a" style="left:142px;top:237px;width:1px;height:440px;background:#dadada;"></div>
<div class="a" style="left:142px;top:208px;width:1px;height:29px;background:#b9b9b9;"></div>
<div class="a" style="left:241px;top:237px;width:1px;height:440px;background:#dadada;"></div>
<div class="a" style="left:241px;top:208px;width:1px;height:29px;background:#b9b9b9;"></div>
<div class="a" style="left:340px;top:237px;width:1px;height:440px;background:#dadada;"></div>
<div class="a" style="left:340px;top:208px;width:1px;height:29px;background:#b9b9b9;"></div>
<div class="a" style="left:439px;top:237px;width:1px;height:440px;background:#dadada;"></div>
<div class="a" style="left:439px;top:208px;width:1px;height:29px;background:#b9b9b9;"></div>
<div class="a" style="left:538px;top:237px;width:1px;height:440px;background:#dadada;"></div>
<div class="a" style="left:538px;top:208px;width:1px;height:29px;background:#b9b9b9;"></div>
<div class="a" style="left:637px;top:237px;width:1px;height:440px;background:#dadada;"></div>
<div class="a" style="left:637px;top:208px;width:1px;height:29px;background:#b9b9b9;"></div>
<div class="a" style="left:736px;top:237px;width:1px;height:440px;background:#dadada;"></div>
<div class="a" style="left:736px;top:208px;width:1px;height:29px;background:#b9b9b9;"></div>
<div class="a" style="left:835px;top:237px;width:1px;height:440px;background:#dadada;"></div>
<div class="a" style="left:835px;top:208px;width:1px;height:29px;background:#b9b9b9;"></div>
<div class="a" style="left:934px;top:237px;width:1px;height:440px;background:#dadada;"></div>
<div class="a" style="left:934px;top:208px;width:1px;height:29px;background:#b9b9b9;"></div>
<div class="a" style="left:1033px;top:237px;width:1px;height:440px;background:#dadada;"></div>
<div class="a" style="left:1033px;top:208px;width:1px;height:29px;background:#b9b9b9;"></div>
<div class="a" style="left:1px;top:237px;width:1077px;height:1px;background:#9b9b9b;"></div>
<div class="a" style="left:1px;top:238px;width:42px;height:439px;background:#e6e6e6;"></div>
<div class="a" style="left:1px;top:268px;width:42px;height:31px;background:#d2d2d2;"></div>
<div class="a" style="left:44px;top:268px;width:1034px;height:1px;background:#dadada;"></div>
<div class="a" style="left:1px;top:268px;width:42px;height:1px;background:#c6c6c6;"></div>
<div class="a" style="left:44px;top:299px;width:1034px;height:1px;background:#dadada;"></div>
<div class="a" style="left:1px;top:299px;width:42px;height:1px;background:#c6c6c6;"></div>
<div class="a" style="left:44px;top:330px;width:1034px;height:1px;background:#dadada;"></div>
<div class="a" style="left:1px;top:330px;width:42px;height:1px;background:#c6c6c6;"></div>
<div class="a" style="left:44px;top:361px;width:1034px;height:1px;background:#dadada;"></div>
<div class="a" style="left:1px;top:361px;width:42px;height:1px;background:#c6c6c6;"></div>
<div class="a" style="left:44px;top:392px;width:1034px;height:1px;background:#dadada;"></div>
<div class="a" style="left:1px;top:392px;width:42px;height:1px;background:#c6c6c6;"></div>
<div class="a" style="left:44px;top:423px;width:1034px;height:1px;background:#dadada;"></div>
<div class="a" style="left:1px;top:423px;width:42px;height:1px;background:#c6c6c6;"></div>
<div class="a" style="left:44px;top:454px;width:1034px;height:1px;background:#dadada;"></div>
<div class="a" style="left:1px;top:454px;width:42px;height:1px;background:#c6c6c6;"></div>
<div class="a" style="left:44px;top:485px;width:1034px;height:1px;background:#dadada;"></div>
<div class="a" style="left:1px;top:485px;width:42px;height:1px;background:#c6c6c6;"></div>
<div class="a" style="left:44px;top:516px;width:1034px;height:1px;background:#dadada;"></div>
<div class="a" style="left:1px;top:516px;width:42px;height:1px;background:#c6c6c6;"></div>
<div class="a" style="left:44px;top:547px;width:1034px;height:1px;background:#dadada;"></div>
<div class="a" style="left:1px;top:547px;width:42px;height:1px;background:#c6c6c6;"></div>
<div class="a" style="left:44px;top:578px;width:1034px;height:1px;background:#dadada;"></div>
<div class="a" style="left:1px;top:578px;width:42px;height:1px;background:#c6c6c6;"></div>
<div class="a" style="left:44px;top:609px;width:1034px;height:1px;background:#dadada;"></div>
<div class="a" style="left:1px;top:609px;width:42px;height:1px;background:#c6c6c6;"></div>
<div class="a" style="left:44px;top:640px;width:1034px;height:1px;background:#dadada;"></div>
<div class="a" style="left:1px;top:640px;width:42px;height:1px;background:#c6c6c6;"></div>
<div class="a" style="left:44px;top:671px;width:1034px;height:1px;background:#dadada;"></div>
<div class="a" style="left:1px;top:671px;width:42px;height:1px;background:#c6c6c6;"></div>
<div class="a" style="left:43px;top:237px;width:1px;height:440px;background:#9b9b9b;"></div>
<div class="t " style="left:-207px;width:600px;text-align:center;top:214px;font-size:22px;color:#222;font-weight:normal;">A</div>
<div class="t " style="left:-108px;width:600px;text-align:center;top:214px;font-size:22px;color:#222;font-weight:normal;">B</div>
<div class="t " style="left:-9px;width:600px;text-align:center;top:214px;font-size:22px;color:#217346;font-weight:normal;">C</div>
<div class="t " style="left:90px;width:600px;text-align:center;top:214px;font-size:22px;color:#222;font-weight:normal;">D</div>
<div class="t " style="left:189px;width:600px;text-align:center;top:214px;font-size:22px;color:#222;font-weight:normal;">E</div>
<div class="t " style="left:288px;width:600px;text-align:center;top:214px;font-size:22px;color:#222;font-weight:normal;">F</div>
<div class="t " style="left:387px;width:600px;text-align:center;top:214px;font-size:22px;color:#222;font-weight:normal;">G</div>
<div class="t " style="left:486px;width:600px;text-align:center;top:214px;font-size:22px;color:#222;font-weight:normal;">H</div>
<div class="t " style="left:585px;width:600px;text-align:center;top:214px;font-size:22px;color:#222;font-weight:normal;">I</div>
<div class="t " style="left:684px;width:600px;text-align:center;top:214px;font-size:22px;color:#222;font-weight:normal;">J</div>
<div class="t " style="left:-277.5px;width:600px;text-align:center;top:243px;font-size:22px;color:#222;font-weight:normal;">1</div>
<div class="t " style="left:-277.5px;width:600px;text-align:center;top:274px;font-size:22px;color:#217346;font-weight:normal;">2</div>
<div class="t " style="left:-277.5px;width:600px;text-align:center;top:305px;font-size:22px;color:#222;font-weight:normal;">3</div>
<div class="t " style="left:-277.5px;width:600px;text-align:center;top:336px;font-size:22px;color:#222;font-weight:normal;">4</div>
<div class="t " style="left:-277.5px;width:600px;text-align:center;top:367px;font-size:22px;color:#222;font-weight:normal;">5</div>
<div class="t " style="left:-277.5px;width:600px;text-align:center;top:398px;font-size:22px;color:#222;font-weight:normal;">6</div>
<div class="t " style="left:-277.5px;width:600px;text-align:center;top:429px;font-size:22px;color:#222;font-weight:normal;">7</div>
<div class="t " style="left:-277.5px;width:600px;text-align:center;top:460px;font-size:22px;color:#222;font-weight:normal;">8</div>
<div class="t " style="left:-277.5px;width:600px;text-align:center;top:491px;font-size:22px;color:#222;font-weight:normal;">9</div>
<div class="t " style="left:-277.5px;width:600px;text-align:center;top:522px;font-size:22px;color:#222;font-weight:normal;letter-spacing:-1.742px;text-indent:-1.742px;">10</div>
<div class="t " style="left:-277.5px;width:600px;text-align:center;top:553px;font-size:22px;color:#222;font-weight:normal;letter-spacing:-0.922px;text-indent:-0.922px;">11</div>
<div class="t " style="left:-277.5px;width:600px;text-align:center;top:584px;font-size:22px;color:#222;font-weight:normal;letter-spacing:-1.742px;text-indent:-1.742px;">12</div>
<div class="t " style="left:-277.5px;width:600px;text-align:center;top:615px;font-size:22px;color:#222;font-weight:normal;letter-spacing:-1.742px;text-indent:-1.742px;">13</div>
<div class="t " style="left:-277.5px;width:600px;text-align:center;top:646px;font-size:22px;color:#222;font-weight:normal;letter-spacing:-1.742px;text-indent:-1.742px;">14</div>
<div class="a" style="left:241px;top:236px;width:99px;height:2px;background:#217346;"></div>
<div class="a" style="left:42px;top:268px;width:2px;height:31px;background:#217346;"></div>
<div class="a" style="left:240px;top:267px;width:98px;height:29px;border:2px solid #217346;"></div>
<div class="a" style="left:337px;top:296px;width:5px;height:5px;background:#217346;border:1px solid #fff;box-sizing:content-box;"></div>
<div class="a" style="left:1078px;top:237px;width:1px;height:441px;background:#9b9b9b;"></div>
<div class="a" style="left:1px;top:677px;width:1078px;height:1px;background:#9b9b9b;"></div>
<div class="a" style="left:1079px;top:208px;width:21px;height:470px;background:#e6e6e6;"></div>
<div class="a" style="left:1082px;top:210px;width:15px;height:15px;background:#fff;border:1px solid #a6a6a6;box-sizing:border-box;"></div>
<svg class="a" style="left:1085px;top:215px;" width="9" height="5" viewBox="0 0 9 5" fill="none"><path d="M0 5H9L4.5 0Z" fill="#666"/></svg>
<div class="a" style="left:1082px;top:226px;width:15px;height:437px;background:#dadada;"></div>
<div class="a" style="left:1082px;top:226px;width:15px;height:304px;background:#fff;border:1px solid #a6a6a6;box-sizing:border-box;"></div>
<div class="a" style="left:1082px;top:663px;width:15px;height:15px;background:#fff;border:1px solid #a6a6a6;box-sizing:border-box;"></div>
<svg class="a" style="left:1085px;top:668px;" width="9" height="5" viewBox="0 0 9 5" fill="none"><path d="M0 0H9L4.5 5Z" fill="#666"/></svg>
<div class="a" style="left:1px;top:678px;width:1099px;height:27px;background:#e6e6e6;"></div>
<svg class="a" style="left:27px;top:686px;" width="5" height="8" viewBox="0 0 5 8" fill="none"><path d="M5 0V8L0 4Z" fill="#c0c0c0"/></svg>
<svg class="a" style="left:57px;top:686px;" width="5" height="8" viewBox="0 0 5 8" fill="none"><path d="M0 0V8L5 4Z" fill="#c0c0c0"/></svg>
<div class="a" style="left:101px;top:677px;width:65px;height:25px;background:#fff;border-left:1px solid #ababab;border-right:1px solid #ababab;box-sizing:border-box;"></div>
<div class="a" style="left:101px;top:700px;width:65px;height:2px;background:#217346;"></div>
<div class="t " style="left:112.30px;top:684px;font-size:13px;color:#217346;font-weight:bold;letter-spacing:-0.340px;">Sheet1</div>
<svg class="a" style="left:199px;top:683px;" width="17" height="17" viewBox="0 0 17 17" fill="none"><circle cx="8" cy="8" r="7.3" stroke="#777" stroke-width="1.2"/><path d="M8 4V12 M4 8H12" stroke="#777" stroke-width="1.5"/></svg>
<div class="a" style="left:660px;top:685px;width:2px;height:2px;background:#a6a6a6;"></div>
<div class="a" style="left:660px;top:690px;width:2px;height:2px;background:#a6a6a6;"></div>
<div class="a" style="left:660px;top:695px;width:2px;height:2px;background:#a6a6a6;"></div>
<div class="a" style="left:677px;top:684px;width:402px;height:15px;background:#dadada;"></div>
<div class="a" style="left:677px;top:684px;width:15px;height:15px;background:#fff;border:1px solid #a6a6a6;box-sizing:border-box;"></div>
<svg class="a" style="left:682px;top:688px;" width="5" height="8" viewBox="0 0 5 8" fill="none"><path d="M5 0V8L0 4Z" fill="#666"/></svg>
<div class="a" style="left:692px;top:684px;width:334px;height:15px;background:#fff;border:1px solid #a6a6a6;box-sizing:border-box;"></div>
<div class="a" style="left:1064px;top:684px;width:15px;height:15px;background:#fff;border:1px solid #a6a6a6;box-sizing:border-box;"></div>
<svg class="a" style="left:1070px;top:688px;" width="5" height="8" viewBox="0 0 5 8" fill="none"><path d="M0 0V8L5 4Z" fill="#666"/></svg>
<div class="a" style="left:1px;top:705px;width:1099px;height:22px;background:#f3f2f1;border-top:1px solid #d6d6d6;box-sizing:border-box;"></div>
<div class="t g" style="left:8.60px;top:711px;font-size:11px;color:#505050;font-weight:normal;letter-spacing:-0.099px;">Ready</div>
<div class="t g" style="left:55.10px;top:712px;font-size:11px;color:#505050;font-weight:normal;letter-spacing:0.358px;">Workbook Statistics</div>
<svg class="a" style="left:176px;top:708px;" width="18" height="17" viewBox="0 0 18 17" fill="none"><circle cx="8" cy="3.1" r="1.7" stroke="#333" stroke-width="1.2"/><path d="M3 6.8C1.3 5 3 3.3 5 4.3L8 5.6L11 4.3C13 3.3 14.7 5 13 6.8 M5.6 6.2V11.5C5.2 13 5.3 14.5 6.8 14.8 M10.5 6.6V9.6 M8.6 11.2L11.5 14.3L16.6 9.2" stroke="#333" stroke-width="1.2" fill="none"/></svg>
<div class="t g" style="left:194.00px;top:712px;font-size:11px;color:#505050;font-weight:normal;letter-spacing:0.262px;">Accessibility: Good to go</div>
<div class="a" style="left:789px;top:705px;width:40px;height:22px;background:#d2d0ce;"></div>
<svg class="a" style="left:802px;top:709px;" width="13" height="13" viewBox="0 0 13 13" fill="none"><rect x="0.6" y="0.6" width="11.8" height="11.8" stroke="#444" stroke-width="1.2"/><path d="M4.6 0.6V12.4 M8.4 0.6V12.4 M0.6 4.6H12.4 M0.6 8.4H12.4" stroke="#444" stroke-width="1.2"/></svg>
<svg class="a" style="left:842px;top:709px;" width="14" height="13" viewBox="0 0 14 13" fill="none"><rect x="0.6" y="0.6" width="12.8" height="11.8" stroke="#444" stroke-width="1.2"/><rect x="4" y="3.2" width="6" height="7" stroke="#444" stroke-width="1.1"/><path d="M5.5 5.2H8.5 M5.5 7H8.5 M5.5 8.8H8.5" stroke="#444" stroke-width="1"/></svg>
<svg class="a" style="left:882px;top:709px;" width="14" height="13" viewBox="0 0 14 13" fill="none"><rect x="0.6" y="0.6" width="12.8" height="11.8" stroke="#444" stroke-width="1.2"/><path d="M4.7 0.6V7.4 M8 0.6V7.4 M0.6 7.4H8" stroke="#444" stroke-width="1.2"/></svg>
<div class="a" style="left:915px;top:716px;width:8px;height:1px;background:#444;"></div>
<div class="a" style="left:928px;top:716px;width:100px;height:1px;background:#605e5c;"></div>
<div class="a" style="left:978px;top:713px;width:1px;height:7px;background:#605e5c;"></div>
<div class="a" style="left:985px;top:711px;width:5px;height:11px;background:#605e5c;"></div>
<svg class="a" style="left:1032px;top:712px;" width="9" height="9" viewBox="0 0 9 9" fill="none"><path d="M4.5 0V9 M0 4.5H9" stroke="#444"/></svg>
<div class="t g" style="left:1054.00px;top:711px;font-size:11px;color:#505050;font-weight:normal;letter-spacing:-0.410px;">154%</div>
<div class="a" style="left:0px;top:0px;width:1101px;height:1px;background:#838383;"></div>
<div class="a" style="left:0px;top:0px;width:1px;height:728px;background:#838383;"></div>
<div class="a" style="left:1100px;top:0px;width:1px;height:728px;background:#838383;"></div>
<div class="a" style="left:0px;top:727px;width:1101px;height:1px;background:#838383;"></div>
<div class="a" style="left:338px;top:352px;width:182px;height:173px;box-shadow:0 2px 14px rgba(0,0,0,0.28);background:#f0f0f0;border:1px solid #8c8c8c;box-sizing:border-box;"></div>
<div class="a" style="left:339px;top:353px;width:180px;height:30px;background:#fff;"></div>
<div class="t " style="left:346.20px;top:362px;font-size:12px;color:#000;font-weight:normal;letter-spacing:-0.019px;">Insert</div>
<div class="t " style="left:447.00px;top:362px;font-size:12.5px;color:#000;font-weight:normal;">?</div>
<svg class="a" style="left:490px;top:362px;" width="11" height="11" viewBox="0 0 11 11" fill="none"><path d="M0.5 0.5L10.5 10.5M10.5 0.5L0.5 10.5" stroke="#000" stroke-width="1"/></svg>
<div class="t " style="left:345.50px;top:391px;font-size:12px;color:#000;font-weight:normal;letter-spacing:-0.086px;">Insert</div>
<div class="a" style="left:380px;top:396px;width:133px;height:1px;background:#dcdcdc;"></div>
<svg class="a" style="left:354.0px;top:414.0px;" width="13" height="13" viewBox="0 0 13 13" fill="none"><circle cx="6.5" cy="6.5" r="6" fill="#fff" stroke="#333" stroke-width="1"/><circle cx="6.5" cy="6.5" r="3.4" fill="#333"/></svg>
<div class="t " style="left:373.50px;top:415px;font-size:12px;color:#000;font-weight:normal;letter-spacing:-0.062px;">Shift cells ri<u>g</u>ht</div>
<div class="a" style="left:372px;top:413px;width:81px;height:16px;border:1px dotted #000;box-sizing:border-box;"></div>
<svg class="a" style="left:354.0px;top:433.0px;" width="13" height="13" viewBox="0 0 13 13" fill="none"><circle cx="6.5" cy="6.5" r="6" fill="#fff" stroke="#333" stroke-width="1"/></svg>
<div class="t " style="left:373.50px;top:434px;font-size:12px;color:#000;font-weight:normal;letter-spacing:-0.087px;">Shift cells <u>d</u>own</div>
<svg class="a" style="left:354.0px;top:452.0px;" width="13" height="13" viewBox="0 0 13 13" fill="none"><circle cx="6.5" cy="6.5" r="6" fill="#fff" stroke="#333" stroke-width="1"/></svg>
<div class="t " style="left:373.50px;top:453px;font-size:12px;color:#000;font-weight:normal;letter-spacing:-0.113px;">Entire <u>r</u>ow</div>
<svg class="a" style="left:354.0px;top:471.0px;" width="13" height="13" viewBox="0 0 13 13" fill="none"><circle cx="6.5" cy="6.5" r="6" fill="#fff" stroke="#333" stroke-width="1"/></svg>
<div class="t " style="left:373.50px;top:472px;font-size:12px;color:#000;font-weight:normal;letter-spacing:-0.198px;">Entire <u>c</u>olumn</div>
<div class="a" style="left:347px;top:406px;width:121px;height:46px;border:3px solid #000;border-radius:5px;box-sizing:border-box;"></div>
<div class="a" style="left:355px;top:495px;width:74px;height:21px;background:#e1e1e1;border:2px solid #0078d7;box-sizing:border-box;"></div>
<div class="t " style="left:92px;width:600px;text-align:center;top:500px;font-size:12px;color:#000;font-weight:normal;letter-spacing:-0.922px;text-indent:-0.922px;">OK</div>
<div class="a" style="left:350px;top:490px;width:82px;height:30px;border:3px solid #000;border-radius:5px;box-sizing:border-box;"></div>
<div class="a" style="left:439px;top:495px;width:73px;height:21px;background:#e1e1e1;border:1px solid #adadad;box-sizing:border-box;"></div>
<div class="t " style="left:175px;width:600px;text-align:center;top:500px;font-size:12px;color:#000;font-weight:normal;letter-spacing:-0.560px;text-indent:-0.560px;">Cancel</div>
<div class="t g" style="left:65.00px;top:417px;font-size:23px;color:#000;font-weight:bold;letter-spacing:0.792px;">Insert Options</div>
<div class="a" style="left:241px;top:427px;width:92px;height:3px;background:#000;"></div>
<svg class="a" style="left:330px;top:422px;" width="18" height="13" viewBox="0 0 18 13" fill="none"><path d="M0 0L18 6.5L0 13L4 6.5Z" fill="#000"/></svg>
<svg class="a" style="left:809px;top:452px;" width="14" height="20" viewBox="0 0 14 20" fill="none"><path d="M1.5 1.6V17.3L5.2 13.9L7.7 19L10.1 18L7.9 13.3H12.5Z" fill="#fff" stroke="#111" stroke-width="1" stroke-linejoin="round"/></svg>
</body></html>
